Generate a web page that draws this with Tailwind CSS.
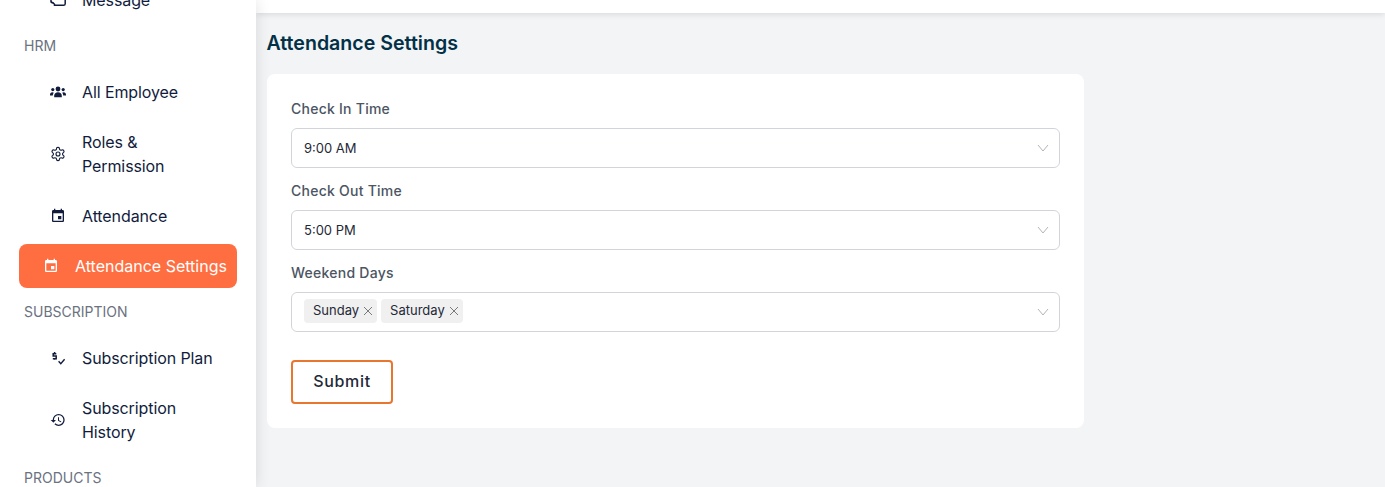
<!DOCTYPE html>
<html lang="en">
<head>
    <meta charset="UTF-8">
    <meta name="viewport" content="width=device-width, initial-scale=1.0">
    <title>Attendance Settings</title>
    <script src="https://cdn.jsdelivr.net/npm/@tailwindcss/browser@4"></script>
</head>
<body class="bg-[#f3f4f6] font-[Inter,sans-serif] h-screen overflow-hidden flex">

    <!-- sidebar, scrolled a little -->
    <aside class="relative z-20 w-[256px] h-screen shrink-0 overflow-hidden bg-white shadow-[0_0_14px_rgba(0,0,0,0.12)]">
        <div class="-mt-[22px] pl-[19px] pr-[19px] text-base tracking-[-0.1px] text-[#111c3d]">

            <a class="flex items-center gap-[16px] h-[44px] pl-[31px]">
                <svg class="w-[16px] h-[16px] shrink-0" viewBox="0 0 16 16" fill="none" stroke="currentColor" stroke-width="1.5"><path d="M1 6v3.5c0 .8.5 1.2 1.2 1.2H3l1.5 1.6V13.3H13.5c.9 0 1.7-.6 1.7-1.6V6"/><path d="M1 9.5l2 1.5"/></svg>
                <span>Message</span>
            </a>

            <p class="my-[14px] ml-[5px] text-sm leading-5 tracking-normal text-[#6b7280]">HRM</p>

            <nav class="flex flex-col gap-[6px]">
                <a class="flex items-center gap-[16px] py-[10px] pl-[31px]">
                    <svg class="w-[16px] h-[16px] shrink-0" viewBox="0 0 16 16" fill="currentColor"><circle cx="8" cy="5" r="2.4"/><circle cx="2.8" cy="5.6" r="1.6"/><circle cx="13.2" cy="5.6" r="1.6"/><path d="M4.2 13.3v-1.6c0-2 1.6-3.4 3.8-3.4s3.8 1.4 3.8 3.4v1.6z"/><path d="M0 11.5v-1c0-1.3.9-2.3 2.3-2.3.6 0 1.1.2 1.5.5-.7.7-1 1.6-1 2.8z"/><path d="M16 11.5v-1c0-1.3-.9-2.3-2.3-2.3-.6 0-1.1.2-1.5.5.7.7 1 1.6 1 2.8z"/></svg>
                    <span>All Employee</span>
                </a>
                <a class="flex items-center gap-[16px] py-[10px] pl-[31px]">
                    <svg class="w-[16px] h-[16px] shrink-0" viewBox="0 0 24 24" fill="none" stroke="currentColor" stroke-width="1.7" stroke-linecap="round" stroke-linejoin="round"><path d="M12.22 2h-.44a2 2 0 0 0-2 2v.18a2 2 0 0 1-1 1.73l-.43.25a2 2 0 0 1-2 0l-.15-.08a2 2 0 0 0-2.73.73l-.22.38a2 2 0 0 0 .73 2.73l.15.1a2 2 0 0 1 1 1.72v.51a2 2 0 0 1-1 1.74l-.15.09a2 2 0 0 0-.73 2.73l.22.38a2 2 0 0 0 2.73.73l.15-.08a2 2 0 0 1 2 0l.43.25a2 2 0 0 1 1 1.73V20a2 2 0 0 0 2 2h.44a2 2 0 0 0 2-2v-.18a2 2 0 0 1 1-1.73l.43-.25a2 2 0 0 1 2 0l.15.08a2 2 0 0 0 2.73-.73l.22-.39a2 2 0 0 0-.73-2.73l-.15-.08a2 2 0 0 1-1-1.74v-.5a2 2 0 0 1 1-1.74l.15-.09a2 2 0 0 0 .73-2.73l-.22-.38a2 2 0 0 0-2.73-.73l-.15.08a2 2 0 0 1-2 0l-.43-.25a2 2 0 0 1-1-1.73V4a2 2 0 0 0-2-2z"/><circle cx="12" cy="12" r="3"/></svg>
                    <span class="w-[100px]">Roles &amp; Permission</span>
                </a>
                <a class="flex items-center gap-[16px] py-[10px] pl-[31px]">
                    <svg class="w-[16px] h-[16px] shrink-0" viewBox="0 0 24 24" fill="currentColor"><path d="M17 12h-5v5h5v-5zM16 1v2H8V1H6v2H5c-1.11 0-1.99.9-1.99 2L3 19c0 1.1.89 2 2 2h14c1.1 0 2-.9 2-2V5c0-1.1-.9-2-2-2h-1V1h-2zm3 18H5V8h14v11z"/></svg>
                    <span>Attendance</span>
                </a>
                <a class="flex items-center gap-[16px] py-[10px] pl-[24px] rounded-lg bg-[#ff6e40] text-white whitespace-nowrap tracking-normal">
                    <svg class="w-[16px] h-[16px] shrink-0" viewBox="0 0 24 24" fill="currentColor"><path d="M17 12h-5v5h5v-5zM16 1v2H8V1H6v2H5c-1.11 0-1.99.9-1.99 2L3 19c0 1.1.89 2 2 2h14c1.1 0 2-.9 2-2V5c0-1.1-.9-2-2-2h-1V1h-2zm3 18H5V8h14v11z"/></svg>
                    <span>Attendance Settings</span>
                </a>
            </nav>

            <p class="my-[14px] ml-[5px] text-sm leading-5 tracking-normal text-[#6b7280]">SUBSCRIPTION</p>

            <nav class="flex flex-col gap-[6px]">
                <a class="flex items-center gap-[16px] py-[10px] pl-[31px]">
                    <svg class="w-[16px] h-[16px] shrink-0" viewBox="0 0 16 16" fill="none" stroke="currentColor"><path stroke-width="1.5" d="M6.3 3.7H3.2v2.4h3v2.6H2.8M4.6 2v1.6M4.6 8.8v1"/><path stroke-width="1.4" d="M8.6 11.2l2.2 2.4 3.8-4.4"/></svg>
                    <span>Subscription Plan</span>
                </a>
                <a class="flex items-center gap-[16px] py-[10px] pl-[31px]">
                    <svg class="w-[16px] h-[16px] shrink-0" viewBox="0 0 24 24" fill="currentColor"><path d="M13 3a9 9 0 0 0-9 9H1l3.89 3.89.07.14L9 12H6c0-3.87 3.13-7 7-7s7 3.13 7 7-3.13 7-7 7c-1.93 0-3.68-.79-4.94-2.06l-1.42 1.42A8.954 8.954 0 0 0 13 21a9 9 0 0 0 0-18zm-1 5v5l4.28 2.54.72-1.21-3.5-2.08V8H12z"/></svg>
                    <span class="w-[110px]">Subscription History</span>
                </a>
            </nav>

            <p class="my-[14px] ml-[5px] text-sm leading-5 tracking-normal text-[#6b7280]">PRODUCTS</p>
        </div>
    </aside>

    <main class="flex-1 min-w-0">
        <div class="h-[13px] bg-white shadow-[0_1px_6px_rgba(0,0,0,0.12)]"></div>

        <div class="pl-[10.5px] pt-[16px]">
            <h1 class="text-[19.6px] leading-7 font-semibold text-[#023047]">Attendance Settings</h1>

            <form class="mt-[17px] ml-[0.5px] w-[817px] h-[354px] bg-white rounded-lg px-[24px] pt-[25px]">
                <label class="block text-sm leading-5 font-medium tracking-[0.25px] text-[#4b5563]">Check In Time</label>
                <div class="mt-[9px] h-[40px] flex items-center justify-between pl-[12px] pr-[10px] border border-[#d1d5db] rounded-md text-[13px] text-[#1f2937]">
                    <span class="pt-[2px]">9:00 AM</span>
                    <svg class="w-[12px] h-[12px] text-[#b4b4b4]" viewBox="0 0 12 12" fill="none" stroke="currentColor"><path d="M1 3l5 6 5-6"/></svg>
                </div>

                <label class="block mt-[13px] text-sm leading-5 font-medium tracking-[0.25px] text-[#4b5563]">Check Out Time</label>
                <div class="mt-[9px] h-[40px] flex items-center justify-between pl-[12px] pr-[10px] border border-[#d1d5db] rounded-md text-[13px] text-[#1f2937]">
                    <span class="pt-[2px]">5:00 PM</span>
                    <svg class="w-[12px] h-[12px] text-[#b4b4b4]" viewBox="0 0 12 12" fill="none" stroke="currentColor"><path d="M1 3l5 6 5-6"/></svg>
                </div>

                <label class="block mt-[13px] text-sm leading-5 font-medium tracking-[0.25px] text-[#4b5563]">Weekend Days</label>
                <div class="mt-[9px] h-[40px] flex items-center justify-between pl-[12px] pr-[10px] border border-[#d1d5db] rounded-md text-[13px] text-[#1f2937]">
                    <div class="flex gap-[4px] pb-[2px]">
                        <span class="flex items-center gap-[4px] h-[24px] pl-[9px] pr-[4px] bg-[#f0f0f0] rounded">Sunday
                            <svg class="w-[10px] h-[10px] text-[#7a7a7a]" viewBox="0 0 10 10" fill="none" stroke="currentColor"><path d="M1 1l8 8M9 1l-8 8"/></svg>
                        </span>
                        <span class="flex items-center gap-[4px] h-[24px] pl-[9px] pr-[4px] bg-[#f0f0f0] rounded">Saturday
                            <svg class="w-[10px] h-[10px] text-[#7a7a7a]" viewBox="0 0 10 10" fill="none" stroke="currentColor"><path d="M1 1l8 8M9 1l-8 8"/></svg>
                        </span>
                    </div>
                    <svg class="w-[12px] h-[12px] text-[#b4b4b4]" viewBox="0 0 12 12" fill="none" stroke="currentColor"><path d="M1 3l5 6 5-6"/></svg>
                </div>

                <button type="button" class="mt-[28px] w-[102px] h-[44px] pb-[2px] border-2 border-[#e8762e] rounded text-base font-medium tracking-[0.7px] text-[#1f2937]">Submit</button>
            </form>
        </div>
    </main>

</body>
</html>
